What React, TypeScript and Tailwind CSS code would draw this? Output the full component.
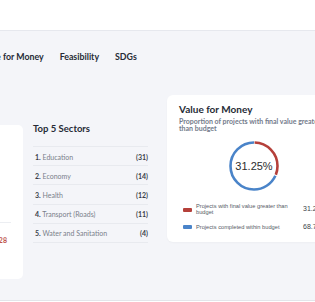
import React from "react";

interface Sector {
  rank: number;
  name: string;
  count: number;
}

const sectors: Sector[] = [
  { rank: 1, name: "Education", count: 31 },
  { rank: 2, name: "Economy", count: 14 },
  { rank: 3, name: "Health", count: 12 },
  { rank: 4, name: "Transport (Roads)", count: 11 },
  { rank: 5, name: "Water and Sanitation", count: 4 },
];

const Donut = () => {
  const r = 23.5;
  const c = 2 * Math.PI * r;
  const red = 0.3125 * c;
  const gap = 1.2;
  return (
    <svg width="54" height="54" viewBox="0 0 54 54">
      <g transform="rotate(-90 27 27)">
        <circle
          cx="27"
          cy="27"
          r={r}
          fill="none"
          stroke="#b5403a"
          strokeWidth="2.6"
          strokeDasharray={`${red - gap} ${c - red + gap}`}
          strokeDashoffset={-gap / 2}
        />
        <circle
          cx="27"
          cy="27"
          r={r}
          fill="none"
          stroke="#4a84c9"
          strokeWidth="2.6"
          strokeDasharray={`${c - red - gap} ${red + gap}`}
          strokeDashoffset={-(red + gap / 2)}
        />
      </g>
      <text
        x="27"
        y="31"
        textAnchor="middle"
        fontSize="11"
        fill="#2d2d2d"
        fontFamily="'Liberation Sans', Arial, sans-serif"
      >
        31.25%
      </text>
    </svg>
  );
};

const App = () => {
  return (
    <div className="w-[315px] h-[302px] overflow-hidden bg-[#f4f5f9] font-['Lato',sans-serif] flex flex-col">
      <div className="h-[31px] shrink-0 bg-white border-b border-[#e6e8ee]" />

      <div className="flex items-center gap-[16px] h-[18px] mt-[17px] ml-[-21px] text-[8.8px] font-bold text-[#262b36]">
        <span>Value for Money</span>
        <span>Feasibility</span>
        <span>SDGs</span>
      </div>

      <div className="flex items-start mt-[29px]">
        <div className="shrink-0 w-[60px] ml-[-37px] mt-[30px] h-[154px] bg-white rounded-[5px] flex flex-col">
          <div className="h-[97px]" />
          <div className="mr-[12px] border-t border-[#eceef2]" />
          <div className="mt-[13px] pr-[16px] text-right text-[7px] font-bold text-[#c0564e] leading-[8px]">
            1,228
          </div>
        </div>

        <div className="shrink-0 w-[115px] ml-[10px] mt-[28px] flex flex-col">
          <div className="text-[9.5px] font-bold text-[#262b36] leading-[12px]">Top 5 Sectors</div>
          <div className="mt-[11px] border-t border-[#e8eaef]" />
          {sectors.map((s) => (
            <div
              key={s.rank}
              className="h-[19.2px] border-b border-[#e8eaef] flex items-center justify-between text-[7px] leading-[8px] pl-[2px] pt-[1px]"
            >
              <span>
                <span className="font-bold text-[#3a3f4a]">{s.rank}.</span>
                <span className="text-[#7a7f8a]"> {s.name}</span>
              </span>
              <span className="font-bold text-[#3a3f4a]">({s.count})</span>
            </div>
          ))}
        </div>

        <div className="shrink-0 w-[172px] ml-[19px] bg-white rounded-[6px] shadow-[0_1px_2px_rgba(0,0,0,0.03)] pt-[8px] pb-[9px] px-[12px] flex flex-col">
          <div className="text-[10px] font-bold text-[#262b36] leading-[12px]">Value for Money</div>
          <div className="mt-[3px] text-[7px] font-bold text-[#737b8b] leading-[7px]">
            Proportion of projects with final value greater
            <br />
            than budget
          </div>
          <div className="flex justify-center mt-[7px] ml-[2px]">
            <Donut />
          </div>
          <div className="mt-[11px] pl-[4px] flex flex-col gap-[7px] font-['Liberation_Sans',sans-serif]">
            <div className="flex items-center">
              <span className="w-[9px] h-[4px] rounded-[1px] bg-[#b5403a] shrink-0" />
              <span className="ml-[4px] w-[107px] text-[5.7px] leading-[5.5px] text-[#555b66]">
                Projects with final value greater than
                <br />
                budget
              </span>
              <span className="text-[7px] text-[#3a3f4a]">31.25%</span>
            </div>
            <div className="flex items-center">
              <span className="w-[9px] h-[4px] rounded-[1px] bg-[#4a84c9] shrink-0" />
              <span className="ml-[4px] w-[107px] text-[5.7px] leading-[5.5px] text-[#555b66]">
                Projects completed within budget
              </span>
              <span className="text-[7px] text-[#3a3f4a]">68.75%</span>
            </div>
          </div>
        </div>
      </div>

      <div className="mt-auto h-[2px] border-t border-[#e3e5ea] bg-white" />
    </div>
  );
};

export default App;
